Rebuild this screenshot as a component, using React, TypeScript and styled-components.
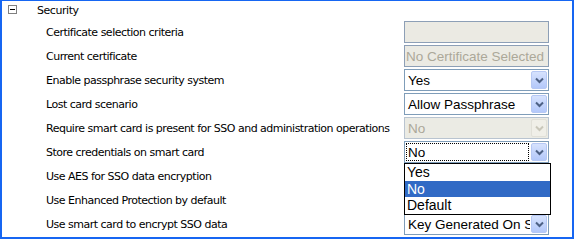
import React from "react";
import styled, { createGlobalStyle, css } from "styled-components";

const GlobalStyle = createGlobalStyle`
  html, body {
    margin: 0;
    padding: 0;
    background: #ffffff;
  }
`;

type Row = {
  label: string;
  kind: "readonly" | "select";
  value: string;
  disabled?: boolean;
  focused?: boolean;
  open?: boolean;
};

const rows: Row[] = [
  { label: "Certificate selection criteria", kind: "readonly", value: "" },
  { label: "Current certificate", kind: "readonly", value: "No Certificate Selected" },
  { label: "Enable passphrase security system", kind: "select", value: "Yes" },
  { label: "Lost card scenario", kind: "select", value: "Allow Passphrase" },
  {
    label: "Require smart card is present for SSO and administration operations",
    kind: "select",
    value: "No",
    disabled: true,
  },
  { label: "Store credentials on smart card", kind: "select", value: "No", focused: true, open: true },
  { label: "Use AES for SSO data encryption", kind: "select", value: "" },
  { label: "Use Enhanced Protection by default", kind: "select", value: "" },
  { label: "Use smart card to encrypt SSO data", kind: "select", value: "Key Generated On Smart Card" },
];

const options = ["Yes", "No", "Default"];

const Frame = styled.div`
  width: 574px;
  height: 239px;
  box-sizing: border-box;
  border: 2px solid #1666f2;
  border-top-width: 1px;
  font-family: "DejaVu Sans", Tahoma, sans-serif;
  font-size: 11px;
  color: #000;
  overflow: hidden;
`;

const Header = styled.div`
  height: 19px;
  display: flex;
  align-items: center;
  padding-left: 6px;
  gap: 20px;
`;

const Toggle = styled.span`
  width: 9px;
  height: 9px;
  box-sizing: border-box;
  border: 1px solid #808080;
  position: relative;
  margin-top: -2px;
  &::after {
    content: "";
    position: absolute;
    left: 1px;
    right: 1px;
    top: 3px;
    height: 1px;
    background: #000;
  }
`;

const HeaderText = styled.span`
  letter-spacing: -0.45px;
`;

const PropRow = styled.div`
  height: 24px;
  display: flex;
  align-items: center;
  padding-left: 44px;
  padding-right: 23px;
`;

const Label = styled.span`
  flex: 1;
  white-space: nowrap;
  letter-spacing: -0.5px;
`;

const Cell = styled.div`
  position: relative;
  width: 145px;
  height: 22px;
`;

const Box = styled.div<{ $disabled?: boolean }>`
  height: 100%;
  box-sizing: border-box;
  border: 1px solid #7f9db9;
  background: #fff;
  display: flex;
  align-items: center;
  font-family: "Liberation Sans", Arial, sans-serif;
  font-size: 13.5px;
  padding: 1px;
  ${({ $disabled }) =>
    $disabled &&
    css`
      background: #ebebe4;
      border-color: #b9c4d0;
      color: #aca899;
    `}
`;

const ReadOnly = styled(Box)`
  background: #ebeae3;
  border-color: #8d9fb6;
  color: #aca899;
  padding-left: 1px;
  white-space: nowrap;
  overflow: hidden;
`;

const Value = styled.span<{ $focused?: boolean }>`
  flex: 1;
  min-width: 0;
  height: 100%;
  box-sizing: border-box;
  display: flex;
  align-items: center;
  padding-left: 1px;
  white-space: nowrap;
  overflow: hidden;
  border: 1px solid transparent;
  ${({ $focused }) =>
    $focused &&
    css`
      border: 1px dotted #000;
      margin-right: 2px;
    `}
`;

const ArrowButton = styled.span<{ $disabled?: boolean }>`
  width: 16px;
  height: 18px;
  flex: none;
  box-sizing: border-box;
  border: 1px solid #b6c8f4;
  border-radius: 2px;
  background: linear-gradient(#d6e2fd, #b3c8fa);
  display: flex;
  align-items: center;
  justify-content: center;
  color: #4d6185;
  ${({ $disabled }) =>
    $disabled &&
    css`
      border-color: #e1e0d8;
      background: #f0efe8;
      color: #c9c7ba;
    `}
`;

const Popup = styled.div`
  position: absolute;
  left: 0;
  top: 22px;
  width: 147px;
  box-sizing: border-box;
  border: 1px solid #000;
  background: #fff;
  font-family: "Liberation Sans", Arial, sans-serif;
  font-size: 14px;
  z-index: 2;
`;

const Option = styled.div<{ $selected?: boolean }>`
  height: 16.5px;
  line-height: 16px;
  padding-left: 2px;
  ${({ $selected }) =>
    $selected &&
    css`
      background: #316ac5;
      color: #fff;
    `}
`;

const Chevron = () => (
  <svg width="9" height="7" viewBox="0 0 9 7">
    <path d="M1 1.5 L4.5 5 L8 1.5" fill="none" stroke="currentColor" strokeWidth="2" />
  </svg>
);

export default function App() {
  return (
    <>
      <GlobalStyle />
      <Frame>
        <Header>
          <Toggle />
          <HeaderText>Security</HeaderText>
        </Header>
        {rows.map((r) => (
          <PropRow key={r.label}>
            <Label>{r.label}</Label>
            <Cell>
              {r.kind === "readonly" ? (
                <ReadOnly>{r.value}</ReadOnly>
              ) : (
                <Box $disabled={r.disabled}>
                  <Value $focused={r.focused}>{r.value}</Value>
                  <ArrowButton $disabled={r.disabled}>
                    <Chevron />
                  </ArrowButton>
                </Box>
              )}
              {r.open && (
                <Popup>
                  {options.map((o) => (
                    <Option key={o} $selected={o === r.value}>
                      {o}
                    </Option>
                  ))}
                </Popup>
              )}
            </Cell>
          </PropRow>
        ))}
      </Frame>
    </>
  );
}
